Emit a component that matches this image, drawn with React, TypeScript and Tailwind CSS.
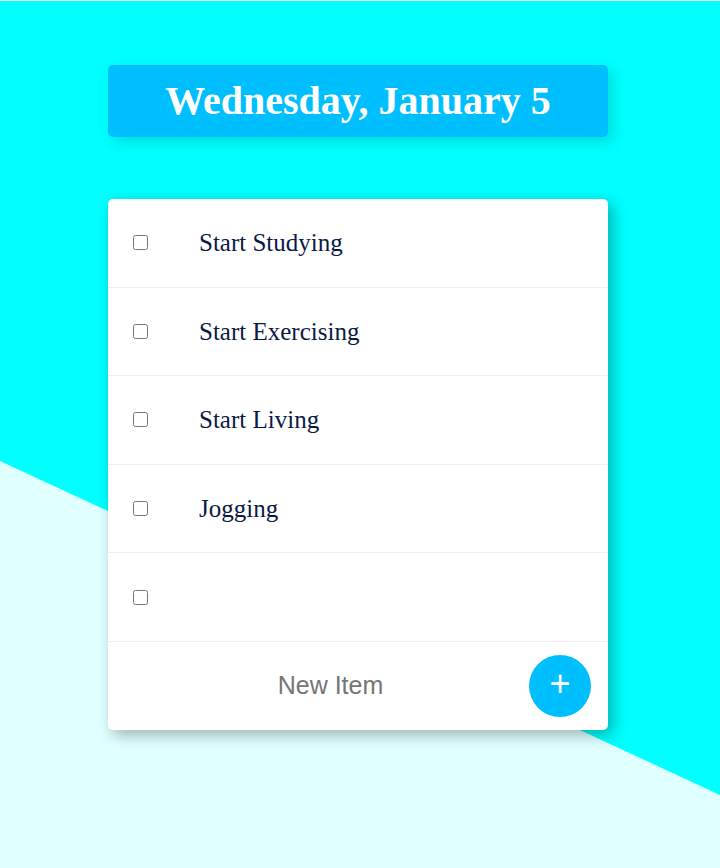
import { useState } from "react";

const ITEMS = ["Start Studying", "Start Exercising", "Start Living", "Jogging", ""];

export default function App() {
  const [checked, setChecked] = useState<boolean[]>(ITEMS.map(() => false));
  const [draft, setDraft] = useState("");

  return (
    <div className="relative min-h-[868px] w-full overflow-hidden bg-[#e0ffff]">
      {/* diagonal cyan backdrop */}
      <div className="absolute inset-0 bg-[#00ffff] [clip-path:polygon(0_0,100%_0,100%_795px,0_461px)]" />
      <div className="absolute left-0 right-0 top-0 h-px bg-[#e6e6e6]" />

      <div className="relative flex flex-col items-center pr-[4px] pt-[65px]">
        <div className="flex h-[72px] w-[500px] items-center justify-center rounded-[5px] bg-[#00bfff] shadow-[5px_5px_15px_rgba(0,0,0,0.15)]">
          <h1 className="font-['Liberation_Serif',serif] text-[40px] font-bold leading-none text-white">
            Wednesday, January 5
          </h1>
        </div>

        <div className="mt-[62px] w-[500px] rounded-[5px] bg-white shadow-[5px_5px_15px_rgba(0,0,0,0.3)]">
          {ITEMS.map((item, i) => (
            <div
              key={i}
              className="flex h-[88.6px] items-center border-b border-[#eeeeee]"
            >
              <input
                type="checkbox"
                checked={checked[i]}
                onChange={() =>
                  setChecked((c) => c.map((v, j) => (j === i ? !v : v)))
                }
                className="ml-[25px] h-[15px] w-[15px]"
              />
              <p className="ml-[51px] font-['Liberation_Serif',serif] text-[25px] text-[#0a1a44]">
                {item}
              </p>
            </div>
          ))}
          <div className="flex h-[88px] items-center">
            <input
              type="text"
              value={draft}
              onChange={(e) => setDraft(e.target.value)}
              placeholder="New Item"
              className="h-full w-[445px] bg-transparent text-center font-['Liberation_Sans',Arial,sans-serif] text-[25px] text-[#333] outline-none placeholder:text-[#757575]"
            />
            <button className="ml-[-24px] flex h-[62px] w-[62px] items-center justify-center rounded-full bg-[#00bfff] pb-[4px] font-['Liberation_Sans',Arial,sans-serif] text-[36px] font-normal leading-none text-white">
              +
            </button>
          </div>
        </div>
      </div>
    </div>
  );
}
